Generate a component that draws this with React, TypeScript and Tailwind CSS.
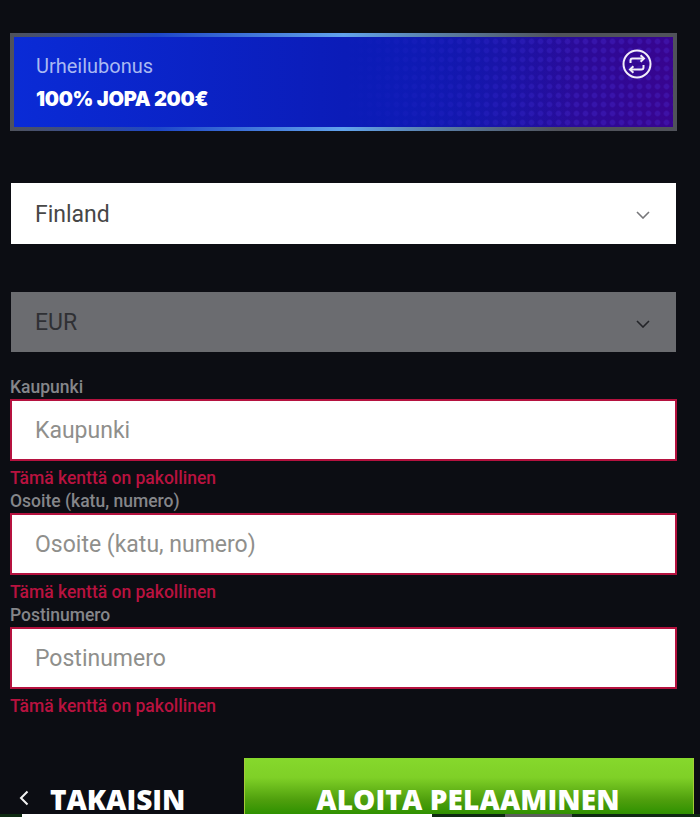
import React from 'react';

const fieldBase = "pt-[3px] text-[23px] font-['Roboto',sans-serif] flex items-center justify-between";

const Chevron: React.FC<{ className: string }> = ({ className }) => (
  <svg viewBox="0 0 14 8" fill="none" stroke="currentColor" strokeWidth={1.6} className={`w-[14px] h-[8px] ${className}`}>
    <path d="M1 1l6 6 6-6" />
  </svg>
);

const SwapIcon: React.FC = () => (
  <svg viewBox="0 0 30 30" fill="none" stroke="#f1edf9" strokeWidth={2} className="w-[30px] h-[30px]">
    <circle cx="15" cy="15" r="13.5" />
    <path d="M8.5 14v-2.5a2 2 0 0 1 2-2h11" />
    <path d="M18.6 6.3l3.4 3.2-3.4 3.2" />
    <path d="M21.5 16v2.5a2 2 0 0 1-2 2h-11" />
    <path d="M11.4 17.3L8 20.5l3.4 3.2" />
  </svg>
);

const RequiredField: React.FC<{ label: string }> = ({ label }) => (
  <div className="flex flex-col">
    <label className="h-[19px] text-[17.5px] leading-[15px] font-medium text-[#85868a] font-['Roboto',sans-serif]">{label}</label>
    <div className={`${fieldBase} h-[62px] pl-[23px] pr-[24px] bg-white border-2 border-[#b5123f] text-[#8f8f8c]`}>{label}</div>
    <div className="h-[33px] pt-[7px] text-[17.5px] leading-[20px] font-medium text-[#b8123f] font-['Roboto',sans-serif]">Tämä kenttä on pakollinen</div>
  </div>
);

export default function App() {
  return (
    <div className="w-[700px] h-[817px] overflow-hidden bg-[#0c0d13] flex flex-col">
      <div className="pt-[33px] pl-[10px] pr-[23px] flex flex-col">
        <div className="h-[98px] p-[4px] bg-[linear-gradient(90deg,#50525a_0%,#1e47c8_22%,#62a3ec_50%,#5a7fa8_64%,#50525a_82%)]">
          <div className="h-full pl-[22px] pr-[21px] pt-[12px] flex justify-between bg-[linear-gradient(90deg,#0a2bd6_0%,#0b1cb8_50%,rgba(11,28,184,0)_85%),radial-gradient(circle,rgba(80,50,225,0.28)_2px,transparent_3.5px),linear-gradient(90deg,#0a2bd6_0%,#0b1cb8_45%,#21109f_75%,#38048f_100%)] bg-[length:100%_100%,9px_9px,100%_100%]">
            <div className="pt-[3px] flex flex-col">
              <div className="text-[20px] leading-[28px] text-[#a9b9f2] font-['Roboto',sans-serif]">Urheilubonus</div>
              <div className="mt-[6px] text-[20px] leading-[26px] font-black text-white tracking-[-0.3px] font-['Inter',sans-serif]">100% JOPA 200€</div>
            </div>
            <SwapIcon />
          </div>
        </div>

        <div className={`${fieldBase} h-[61px] mx-[1px] pl-[24px] pr-[26px] mt-[52px] bg-white text-[#474747]`}>
          <span>Finland</span>
          <Chevron className="text-[#77777a]" />
        </div>

        <div className={`${fieldBase} h-[60px] mx-[1px] pl-[24px] pr-[26px] mt-[48px] bg-[#6b6c70] text-[#2f3034]`}>
          <span>EUR</span>
          <Chevron className="text-[#232428]" />
        </div>

        <div className="mt-[28px] flex flex-col">
          <RequiredField label="Kaupunki" />
          <RequiredField label="Osoite (katu, numero)" />
          <RequiredField label="Postinumero" />
        </div>
      </div>

      <div className="mt-[36px] flex h-[56px]">
        <div className="w-[244px] pl-[19px] flex items-end">
          <svg viewBox="0 0 10 16" fill="none" stroke="#f2f2f2" strokeWidth={2} className="w-[10px] h-[16px] mb-[8px]">
            <path d="M8.5 1.5L2 8l6.5 6.5" />
          </svg>
          <span className="ml-[21px] text-[28px] leading-[30px] font-extrabold text-white font-['Open_Sans',sans-serif]">TAKAISIN</span>
        </div>
        <div className="w-[450px] flex items-end justify-center border-x border-[#a4cc38] bg-[linear-gradient(180deg,#86d82c_0%,#7fd027_35%,#4f9f0d_75%,#2f9100_100%)]">
          <span className="mr-[2px] text-[28px] leading-[30px] tracking-[0.1px] font-extrabold text-white font-['Open_Sans',sans-serif]">ALOITA PELAAMINEN</span>
        </div>
      </div>
      <div className="flex h-[3px] bg-[#0f2a12]">
        <div className="ml-[22px] w-[410px] bg-white" />
        <div className="ml-[73px] w-[67px] bg-[#5a5c5a]" />
      </div>
    </div>
  );
}
